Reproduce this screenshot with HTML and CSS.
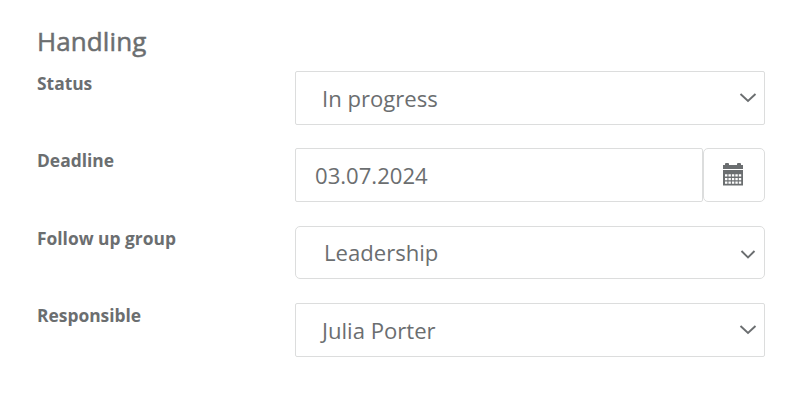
FILE: index.html
```
<!DOCTYPE html>
<html lang="en">
<head>
  <meta charset="UTF-8">
  <meta name="viewport" content="width=device-width, initial-scale=1.0">
  <title>Handling</title>
  <link rel="stylesheet" href="styles.css">
</head>
<body>
  <h1>Handling</h1>

  <div class="form">
    <div class="row">
      <div class="label">Status</div>
      <div class="field select">
        <span class="value">In progress</span>
        <svg class="chevron" width="18" height="12" viewBox="0 0 18 12"><path d="M1.5 2 L9 9 L16.5 2"/></svg>
      </div>
    </div>

    <div class="row">
      <div class="label">Deadline</div>
      <div class="date-group">
        <div class="field date"><span class="value">03.07.2024</span></div>
        <div class="field date-button">
          <svg class="calendar" width="20" height="23" viewBox="0 0 20 23">
            <path class="solid" d="M0 2 H2 V1 Q2 0 3 0 H5 Q6 0 6 1 V2 H14 V1 Q14 0 15 0 H17 Q18 0 18 1 V2 H20 V6 H0 Z"/>
            <path class="solid" d="M0 7 H20 V22.5 H0 Z"/>
            <path class="days" d="M2 12.3 H18.4 M2 16.1 H18.4 M2 19.7 H18.4"/>
          </svg>
        </div>
      </div>
    </div>

    <div class="row">
      <div class="label">Follow up group</div>
      <div class="field select group">
        <span class="value">Leadership</span>
        <svg class="chevron small" width="16" height="12" viewBox="0 0 16 12"><path d="M1.5 2 L8 8.5 L14.5 2"/></svg>
      </div>
    </div>

    <div class="row">
      <div class="label">Responsible</div>
      <div class="field select">
        <span class="value">Julia Porter</span>
        <svg class="chevron" width="18" height="12" viewBox="0 0 18 12"><path d="M1.5 2 L9 9 L16.5 2"/></svg>
      </div>
    </div>
  </div>
</body>
</html>
```
FILE: styles.css
```
* {
  box-sizing: border-box;
}

body {
  margin: 0;
  padding: 23px 35px 0 37px;
  background: #fff;
  color: #6b6e70;
  font-family: "Open Sans", sans-serif;
}

h1 {
  margin: 0;
  height: 48px;
  font-size: 26px;
  font-weight: 500;
  line-height: 36px;
  letter-spacing: 0.1px;
  -webkit-text-stroke: 0.5px #6b6e70;
}

.form {
  display: grid;
  grid-auto-rows: 54px;
  gap: 23.3px;
}

.row {
  display: grid;
  grid-template-columns: 258px 470px;
}

.label {
  font-size: 17.4px;
  font-weight: 700;
  line-height: 24px;
}

.field {
  display: flex;
  align-items: center;
  height: 54px;
  border: 1px solid #dcdddd;
  border-radius: 2px;
  font-size: 22.1px;
}

.select {
  justify-content: space-between;
  padding: 0 7px 0 26px;
}

.chevron {
  fill: none;
  stroke: #6b6e70;
  stroke-width: 1.9;
}

/* Follow up group */
.group {
  height: 53px;
  padding: 0 8px 0 28px;
  border-radius: 5px;
}

.small {
  margin-top: 5px;
}

/* Date input with calendar button */
.date-group {
  display: flex;
}

.date {
  flex: 1;
  padding-left: 19px;
}

.date-button {
  width: 62px;
  padding: 0 0 1px 19px;
  border-radius: 5px;
}

.solid {
  fill: #6b6e70;
}

.days {
  fill: none;
  stroke: #fff;
  stroke-width: 2.2;
  stroke-dasharray: 2.4 1.05;
}
```
